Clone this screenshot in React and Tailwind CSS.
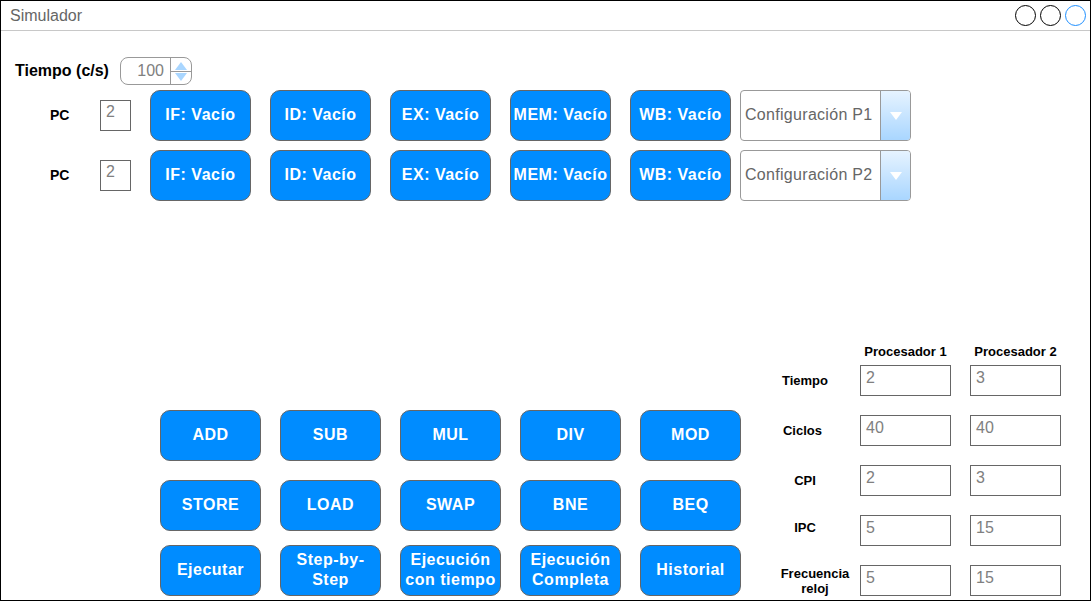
import React from "react";

const stages = ["IF: Vacío", "ID: Vacío", "EX: Vacío", "MEM: Vacío", "WB: Vacío"];

const ops = [
  ["ADD", "SUB", "MUL", "DIV", "MOD"],
  ["STORE", "LOAD", "SWAP", "BNE", "BEQ"],
];

const actions = [
  ["Ejecutar"],
  ["Step-by-", "Step"],
  ["Ejecución", "con tiempo"],
  ["Ejecución", "Completa"],
  ["Historial"],
];

const stats = [
  { label: ["Tiempo"], p1: "2", p2: "3" },
  { label: ["Ciclos"], p1: "40", p2: "40", left: true },
  { label: ["CPI"], p1: "2", p2: "3" },
  { label: ["IPC"], p1: "5", p2: "15", up: true },
  { label: ["Frecuencia", "reloj"], p1: "5", p2: "15", shift: true },
];

function BlueButton({ children }) {
  return (
    <div className="w-[101px] h-[51px] shrink-0 rounded-[10px] border border-[#666] bg-[#008cff] text-white font-bold text-[16px] tracking-[0.5px] leading-[20px] pb-[2px] flex flex-col items-center justify-center text-center">
      {children}
    </div>
  );
}

function PipelineRow({ label }) {
  return (
    <div className="flex items-center">
      <div className="w-[99px] pl-[49px] font-bold text-[14px]">PC</div>
      <div className="w-[31px] h-[31px] border border-[#666] pl-[5px] pt-[2px] text-[16px] leading-[18px] text-[#808080]">
        2
      </div>
      <div className="flex gap-[19px] ml-[19px]">
        {stages.map((s) => (
          <BlueButton key={s}>{s}</BlueButton>
        ))}
      </div>
      <div className="ml-[9px] w-[171px] h-[51px] rounded-[4px] border border-[#999] flex overflow-hidden">
        <div className="flex-1 flex items-center pl-[4px] pb-[2px] text-[16px] tracking-[0.3px] text-[#666] whitespace-nowrap overflow-hidden">
          {label}
        </div>
        <div className="w-[30px] border-l border-[#999] bg-gradient-to-b from-[#e6f3ff] to-[#a9d6ff] flex items-center justify-center">
          <svg width="14" height="10" viewBox="0 0 14 10">
            <path d="M1 1 L13 1 L7 9 Z" fill="#fff" />
          </svg>
        </div>
      </div>
    </div>
  );
}

export default function App() {
  return (
    <div className="w-[1091px] h-[601px] border border-black bg-white flex flex-col text-black" style={{ fontFamily: '"Liberation Sans", Arial, sans-serif' }}>
      <div className="h-[30px] shrink-0 border-b border-[#c8c8c8] flex items-center justify-between pl-[9px] pr-[4px]">
        <span className="text-[16px] text-[#666]">Simulador</span>
        <div className="flex gap-[4px]">
          <div className="w-[21px] h-[21px] rounded-full border-[1.5px] border-black" />
          <div className="w-[21px] h-[21px] rounded-full border-[1.5px] border-black" />
          <div className="w-[21px] h-[21px] rounded-full border-[1.5px] border-[#1e8fff]" />
        </div>
      </div>

      <div className="flex-1 flex flex-col">
        <div className="flex items-center mt-[26px] pl-[14px]">
          <div className="w-[105px] font-bold text-[16px]">Tiempo (c/s)</div>
          <div className="w-[72px] h-[28px] rounded-[8px] border border-[#999] flex">
            <div className="flex-1 flex items-center justify-end pr-[6px] text-[16px] text-[#808080]">100</div>
            <div className="w-[21px] border-l border-[#999] flex flex-col">
              <div className="flex-1 flex items-end justify-center pb-[1px] border-b border-[#999]">
                <svg width="12" height="8" viewBox="0 0 12 8">
                  <path d="M6 0 L12 8 L0 8 Z" fill="#a9d6ff" />
                </svg>
              </div>
              <div className="flex-1 flex items-start justify-center pt-[1px]">
                <svg width="12" height="8" viewBox="0 0 12 8">
                  <path d="M0 0 L12 0 L6 8 Z" fill="#a9d6ff" />
                </svg>
              </div>
            </div>
          </div>
        </div>

        <div className="mt-[5px] flex flex-col gap-[9px]">
          <PipelineRow label="Configuración P1" />
          <PipelineRow label="Configuración P2" />
        </div>

        <div className="mt-auto flex items-end pl-[159px] pb-[4px]">
          <div className="flex flex-col">
            {ops.map((row, i) => (
              <div key={i} className={`flex gap-[19px] ${i === 0 ? "" : "mt-[19px]"}`}>
                {row.map((op) => (
                  <BlueButton key={op}>{op}</BlueButton>
                ))}
              </div>
            ))}
            <div className="flex gap-[19px] mt-[14px]">
              {actions.map((lines, i) => (
                <BlueButton key={i}>
                  {lines.map((l) => (
                    <span key={l}>{l}</span>
                  ))}
                </BlueButton>
              ))}
            </div>
          </div>

          <div className="ml-[19px] flex flex-col text-[13px] font-bold">
            <div className="flex h-[15px] mb-[6px] leading-[15px]">
              <div className="w-[100px]" />
              <div className="w-[91px] text-center">Procesador 1</div>
              <div className="w-[91px] ml-[19px] text-center">Procesador 2</div>
            </div>
            <div className="flex flex-col gap-[19px]">
              {stats.map((s) => (
                <div key={s.label[0]} className="flex items-center">
                  <div
                    className={`w-[100px] text-center leading-[15px] ${s.shift ? "pl-[20px] pr-[10px]" : s.left ? "pr-[15px]" : "pr-[10px]"} ${s.up ? "pb-[6px]" : ""}`}
                  >
                    {s.label.map((l) => (
                      <div key={l}>{l}</div>
                    ))}
                  </div>
                  <div className="w-[91px] h-[31px] border border-[#666] pl-[5px] pt-[3px] text-[16px] leading-[18px] font-normal text-[#808080]">
                    {s.p1}
                  </div>
                  <div className="w-[91px] h-[31px] ml-[19px] border border-[#666] pl-[5px] pt-[3px] text-[16px] leading-[18px] font-normal text-[#808080]">
                    {s.p2}
                  </div>
                </div>
              ))}
            </div>
          </div>
        </div>
      </div>
    </div>
  );
}
